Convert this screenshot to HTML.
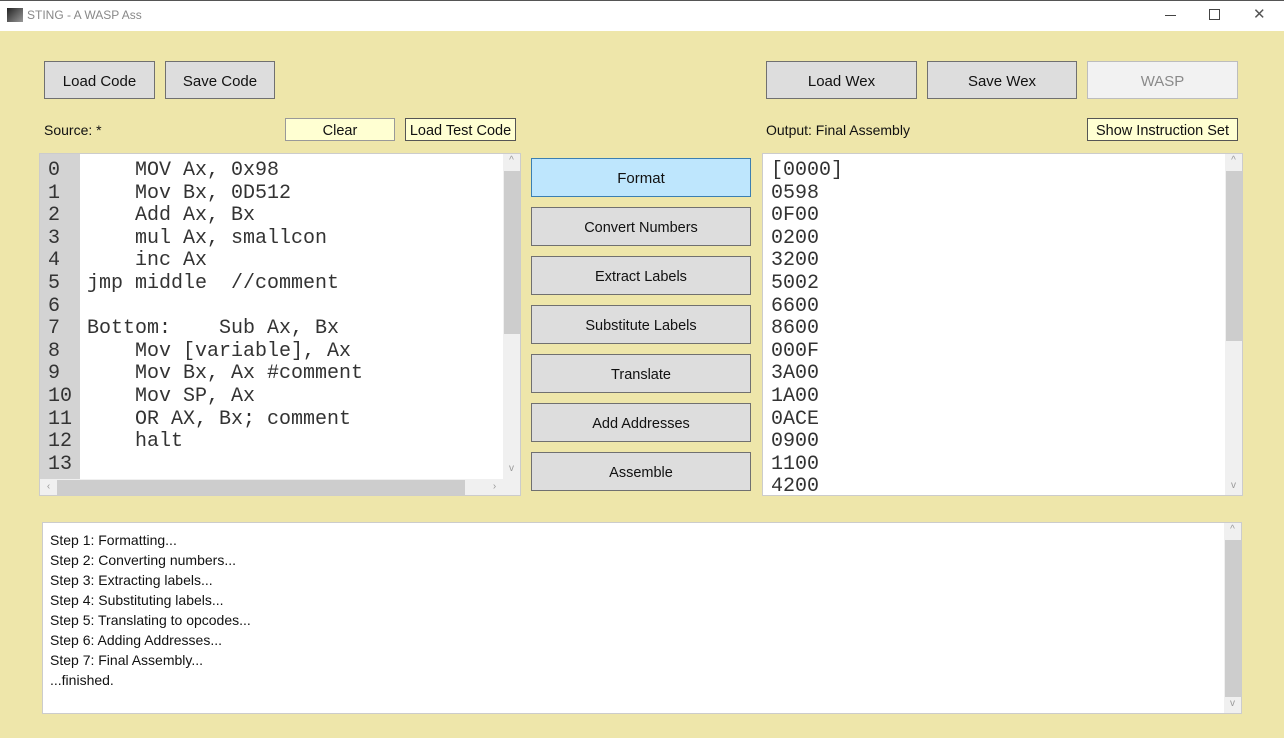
<!DOCTYPE html>
<html><head><style>
*{margin:0;padding:0;box-sizing:border-box}
body{width:1284px;height:738px;background:#EEE6AA;font-family:"Liberation Sans",sans-serif;position:relative;overflow:hidden}
.a{position:absolute}
.btn{position:absolute;background:#DDDDDD;border:1px solid #707070;font-size:15px;color:#111;display:flex;align-items:center;justify-content:center;padding-top:2px}
.sm{font-size:14.5px}
.mono{font-family:"Liberation Mono",monospace;font-size:20px;line-height:22.6px;color:#333;white-space:pre}
.sb{position:absolute;background:#F0F0F0}
.th{position:absolute;background:#CDCDCD}
.ar{position:absolute;font-size:10px;color:#999;width:17px;text-align:center}
.lbl{position:absolute;font-size:14px;color:#111}
</style></head><body>
<div class="a" style="left:0;top:0;width:1284px;height:31px;background:#fff;border-top:1px solid #555"></div>
<div class="a" style="left:7px;top:8px;width:16px;height:14px;background:linear-gradient(135deg,#222,#999)"></div>
<div class="a" style="left:27px;top:8px;font-size:12px;color:#888">STING - A WASP Ass</div>
<div class="a" style="left:1165px;top:15px;width:11px;height:1px;background:#444"></div>
<div class="a" style="left:1209px;top:9px;width:11px;height:11px;border:1px solid #444"></div>
<div class="a" style="left:1253px;top:5px;font-size:15px;color:#555">✕</div>

<div class="btn" style="left:44px;top:61px;width:111px;height:38px">Load Code</div>
<div class="btn" style="left:165px;top:61px;width:110px;height:38px">Save Code</div>
<div class="btn" style="left:766px;top:61px;width:151px;height:38px">Load Wex</div>
<div class="btn" style="left:927px;top:61px;width:150px;height:38px">Save Wex</div>
<div class="btn" style="left:1087px;top:61px;width:151px;height:38px;background:#F2F2F2;border-color:#BDBDBD;color:#8a8a8a">WASP</div>

<div class="lbl" style="left:44px;top:122px">Source: *</div>
<div class="btn sm" style="left:285px;top:118px;width:110px;height:23px;background:#FFFFD2;border-color:#999">Clear</div>
<div class="btn sm" style="left:405px;top:118px;width:111px;height:23px;background:#FFFFD2;border-color:#555">Load Test Code</div>
<div class="lbl" style="left:766px;top:122px">Output: Final Assembly</div>
<div class="btn sm" style="left:1087px;top:118px;width:151px;height:23px;background:#FFFFD2;border-color:#555">Show Instruction Set</div>

<div class="a" style="left:39px;top:153px;width:482px;height:343px;background:#fff;border:1px solid #ccc;overflow:hidden">
<div class="a" style="left:0;top:0;width:40px;height:343px;background:#D3D3D3"></div>
<div class="a mono" style="left:8px;top:6px">0
1
2
3
4
5
6
7
8
9
10
11
12
13</div>
<div class="a mono" style="left:47px;top:6px">    MOV Ax, 0x98
    Mov Bx, 0D512
    Add Ax, Bx
    mul Ax, smallcon
    inc Ax
jmp middle  //comment

Bottom:    Sub Ax, Bx
    Mov [variable], Ax
    Mov Bx, Ax #comment
    Mov SP, Ax
    OR AX, Bx; comment
    halt
</div>
<div class="sb" style="left:463px;top:0;width:17px;height:325px"></div>
<div class="th" style="left:464px;top:17px;width:16px;height:163px"></div>
<div class="ar" style="left:463px;top:1px">^</div>
<div class="ar" style="left:463px;top:309px">v</div>
<div class="sb" style="left:0;top:325px;width:480px;height:17px"></div>
<div class="th" style="left:17px;top:326px;width:408px;height:16px"></div>
<div class="ar" style="left:0;top:327px">‹</div>
<div class="ar" style="left:446px;top:327px">›</div>
</div>

<div class="btn" style="left:531px;top:158px;width:220px;height:39px;background:#BEE6FD;border-color:#3C7FB1">Format</div>
<div class="btn sm" style="left:531px;top:207px;width:220px;height:39px">Convert Numbers</div>
<div class="btn sm" style="left:531px;top:256px;width:220px;height:39px">Extract Labels</div>
<div class="btn sm" style="left:531px;top:305px;width:220px;height:39px">Substitute Labels</div>
<div class="btn sm" style="left:531px;top:354px;width:220px;height:39px">Translate</div>
<div class="btn sm" style="left:531px;top:403px;width:220px;height:39px">Add Addresses</div>
<div class="btn sm" style="left:531px;top:452px;width:220px;height:39px">Assemble</div>

<div class="a" style="left:762px;top:153px;width:481px;height:343px;background:#fff;border:1px solid #ccc;overflow:hidden">
<div class="a mono" style="left:8px;top:6px">[0000]
0598
0F00
0200
3200
5002
6600
8600
000F
3A00
1A00
0ACE
0900
1100
4200</div>
<div class="sb" style="left:462px;top:0;width:17px;height:341px"></div>
<div class="th" style="left:463px;top:17px;width:16px;height:170px"></div>
<div class="ar" style="left:462px;top:1px">^</div>
<div class="ar" style="left:462px;top:326px">v</div>
</div>

<div class="a" style="left:42px;top:522px;width:1200px;height:192px;background:#fff;border:1px solid #ccc;overflow:hidden">
<div class="a" style="left:7px;top:7px;font-size:14px;line-height:20px;color:#111">Step 1: Formatting...<br>Step 2: Converting numbers...<br>Step 3: Extracting labels...<br>Step 4: Substituting labels...<br>Step 5: Translating to opcodes...<br>Step 6: Adding Addresses...<br>Step 7: Final Assembly...<br>...finished.</div>
<div class="sb" style="left:1181px;top:0;width:17px;height:190px"></div>
<div class="th" style="left:1182px;top:17px;width:16px;height:157px"></div>
<div class="ar" style="left:1181px;top:1px">^</div>
<div class="ar" style="left:1181px;top:175px">v</div>
</div>
</body></html>
